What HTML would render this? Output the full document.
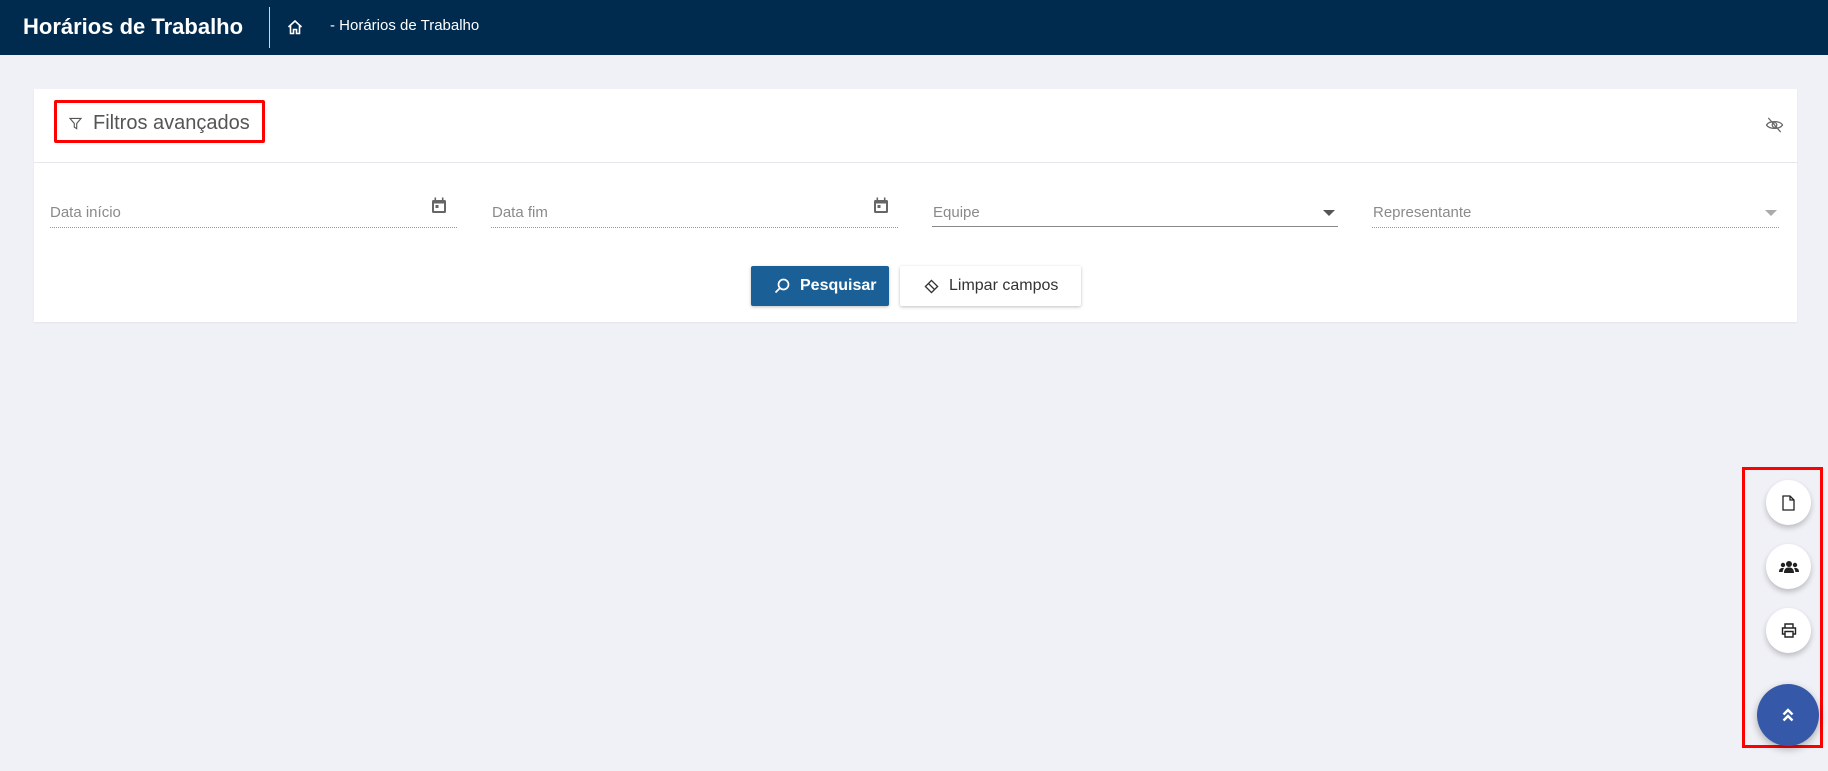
<!DOCTYPE html>
<html><head><meta charset="utf-8"><style>
*{box-sizing:border-box;margin:0;padding:0}
body{width:1828px;height:771px;background:#f0f1f6;font-family:"Liberation Sans",sans-serif;position:relative;overflow:hidden}
.hdr{position:absolute;left:0;top:0;width:1828px;height:55px;background:#002a4e}
.abs{position:absolute}
.card{position:absolute;left:34px;top:89px;width:1763px;height:233px;background:#fff;box-shadow:0 1px 2px rgba(0,0,0,.06)}
.lbl{position:absolute;font-size:15px;color:#8a8a8a}
.dot{position:absolute;top:227px;height:1px;border-top:1px dotted #999}
.fab{position:absolute;width:45px;height:45px;border-radius:50%;background:#fff;box-shadow:0 3px 6px rgba(0,0,0,.22);display:flex;align-items:center;justify-content:center}
</style></head><body>
<div class="hdr"></div>
<div class="abs" style="left:23px;top:14px;color:#fff;font-size:22px;font-weight:bold">Horários de Trabalho</div>
<div class="abs" style="left:269px;top:7px;width:1px;height:41px;background:#cfd6de"></div>
<svg class="abs" style="left:287px;top:19px" width="16" height="16" viewBox="0 0 16 16" fill="none" stroke="#fff" stroke-width="1.6"><path d="M1.5 8L8 2l6.5 6M3.5 6.5V14.5h3v-4h3v4h3V6.5"/></svg>
<div class="abs" style="left:330px;top:17px;color:#fff;font-size:15px">- Horários de Trabalho</div>

<div class="card">
  <div class="abs" style="left:0;top:73px;width:1763px;height:1px;background:#e8e8ec"></div>
</div>
<div class="abs" style="left:54px;top:100px;width:211px;height:43px;border:3px solid #f00;border-radius:2px"></div>
<svg class="abs" style="left:69px;top:117px" width="13" height="13" viewBox="0 0 14 14" fill="none" stroke="#555" stroke-width="1.2"><path d="M1 1.5h12L8.3 7v5.5L5.7 11V7z"/></svg>
<div class="abs" style="left:93px;top:112px;font-size:20px;color:#555">Filtros avançados</div>
<svg class="abs" style="left:1765px;top:117px" width="19" height="16" viewBox="0 0 20 18" fill="none" stroke="#666" stroke-width="1.4"><path d="M1 9c3-5 15-5 18 0c-3 5-15 5-18 0z"/><circle cx="10" cy="9" r="2.6"/><path d="M3 1l14 16"/></svg>

<div class="lbl" style="left:50px;top:204px">Data início</div>
<div class="dot" style="left:50px;width:407px"></div>
<svg class="abs" style="left:431px;top:197px" width="16" height="17" viewBox="0 0 16 17"><rect x="1" y="3" width="14" height="13" rx="1.5" fill="#666"/><rect x="3" y="6.5" width="10" height="7.5" fill="#fff"/><rect x="4.5" y="8" width="3" height="3" fill="#666"/><rect x="3.5" y="0.5" width="1.6" height="3" fill="#666"/><rect x="10.9" y="0.5" width="1.6" height="3" fill="#666"/></svg>
<div class="lbl" style="left:492px;top:204px">Data fim</div>
<div class="dot" style="left:491px;width:407px"></div>
<svg class="abs" style="left:873px;top:197px" width="16" height="17" viewBox="0 0 16 17"><rect x="1" y="3" width="14" height="13" rx="1.5" fill="#666"/><rect x="3" y="6.5" width="10" height="7.5" fill="#fff"/><rect x="4.5" y="8" width="3" height="3" fill="#666"/><rect x="3.5" y="0.5" width="1.6" height="3" fill="#666"/><rect x="10.9" y="0.5" width="1.6" height="3" fill="#666"/></svg>
<div class="lbl" style="left:933px;top:204px">Equipe</div>
<div class="abs" style="left:932px;top:226px;width:406px;height:1px;background:#888"></div>
<div class="abs" style="left:1323px;top:210px;border-left:6px solid transparent;border-right:6px solid transparent;border-top:6px solid #555"></div>
<div class="lbl" style="left:1373px;top:204px">Representante</div>
<div class="dot" style="left:1372px;width:407px"></div>
<div class="abs" style="left:1765px;top:210px;border-left:6px solid transparent;border-right:6px solid transparent;border-top:6px solid #aaa"></div>

<div class="abs" style="left:751px;top:266px;width:138px;height:40px;background:#1a5f96;border-radius:2px;box-shadow:0 1px 3px rgba(0,0,0,.25);color:#fff;font-weight:bold;font-size:16px;line-height:40px;padding-left:49px">Pesquisar</div>
<svg class="abs" style="left:774px;top:278px" width="16" height="16" viewBox="0 0 16 16" fill="none" stroke="#fff" stroke-width="1.7"><circle cx="9.5" cy="6.5" r="5"/><path d="M6 10l-4.5 4.5"/></svg>
<div class="abs" style="left:900px;top:266px;width:181px;height:40px;background:#fff;border-radius:2px;box-shadow:0 1px 3px rgba(0,0,0,.25);color:#333;font-size:16px;line-height:40px;padding-left:49px">Limpar campos</div>
<svg class="abs" style="left:924px;top:279px" width="15" height="15" viewBox="0 0 16 16" fill="none" stroke="#333" stroke-width="1.4"><path d="M8 1.5L14.5 8 8 14.5 1.5 8z M4.8 4.8l6.4 6.4"/></svg>

<div class="abs" style="left:1742px;top:467px;width:81px;height:281px;border:3px solid #f00"></div>
<div class="fab" style="left:1766px;top:480px"><svg width="13" height="16" viewBox="0 0 13 16" fill="none" stroke="#222" stroke-width="1.3"><path d="M1 1h7l4 4v10H1z M8 1v4h4"/></svg></div>
<div class="fab" style="left:1766px;top:544px"><svg width="20" height="14" viewBox="0 0 20 14" fill="#222"><circle cx="10" cy="4" r="3"/><circle cx="4" cy="5" r="2.2"/><circle cx="16" cy="5" r="2.2"/><path d="M5 13c0-4 2-5.5 5-5.5s5 1.5 5 5.5z M0 12c0-3 1.5-4 3.5-4 1 0 1.5.3 1.5.3C4 9.5 3.7 11 3.7 12z M20 12c0-3-1.5-4-3.5-4-1 0-1.5.3-1.5.3 1 1.2 1.3 2.7 1.3 3.7z"/></svg></div>
<div class="fab" style="left:1766px;top:608px"><svg width="16" height="15" viewBox="0 0 16 15" fill="none" stroke="#222" stroke-width="1.4"><path d="M4 5V1h8v4 M4 11H1.5V5h13v6H12 M4 8.5h8V14H4z"/></svg></div>
<div class="abs" style="left:1757px;top:684px;width:62px;height:62px;border-radius:50%;background:#3558a8;box-shadow:0 3px 8px rgba(0,0,0,.3);display:flex;align-items:center;justify-content:center"><svg width="12" height="14" viewBox="0 0 12 14" fill="none" stroke="#fff" stroke-width="2.4"><path d="M1.5 6.5L6 2l4.5 4.5 M1.5 12.5L6 8l4.5 4.5"/></svg></div>
</body></html>
